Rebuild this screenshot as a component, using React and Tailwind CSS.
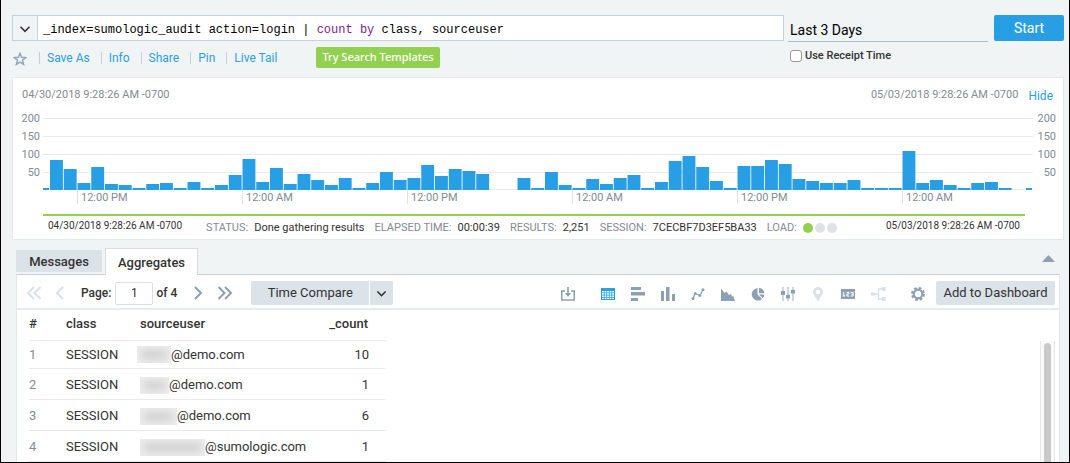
import { useState } from 'react';

const KEYWORDS = ['count', 'by'];

// heights in px above the axis, one per hour
const BARS = [
  30, 21, 7, 23, 6, 5, 2, 6, 7, 2, 8, 2, 5, 15, 31, 8, 22, 6, 16, 10, 5, 12, 2, 7, 18, 10, 12, 25, 14, 21, 19, 16, 0, 0,
  12, 2, 18, 5, 2, 11, 6, 12, 15, 2, 8, 29, 34, 23, 9, 2, 24, 24, 30, 26, 11, 9, 7, 7, 10, 2, 2, 2, 39, 7, 10, 5, 2, 7,
  8, 2, 0
];
const BAR_STEP = 13.75;
const GRID_LINES = [0, 18, 36, 54, 71];
const TICK_LABELS = ['12:00 PM', '12:00 AM', '12:00 PM', '12:00 AM', '12:00 PM', '12:00 AM'];

const ROWS = [
  { id: 1, type: 'SESSION', mask: 'w-[34px] -ml-[3px]', domain: '@demo.com', count: 10 },
  { id: 2, type: 'SESSION', mask: 'w-[29px]', domain: '@demo.com', count: 1 },
  { id: 3, type: 'SESSION', mask: 'w-[37px]', domain: '@demo.com', count: 6 },
  { id: 4, type: 'SESSION', mask: 'w-[65px]', domain: '@sumologic.com', count: 1 }
];

function Chevron({ className }) {
  return (
    <svg className={className} viewBox="0 0 12 12" fill="none" stroke="currentColor" strokeWidth="1.6">
      <path d="M1.5 3.8 6 8.3l4.5-4.5" />
    </svg>
  );
}

function Arrow({ double, flip }) {
  return (
    <svg className={flip ? 'h-4 w-4 -scale-x-100' : 'h-4 w-4'} viewBox="0 0 16 16" fill="none" stroke="currentColor" strokeWidth="2">
      {double ? <path d="m1.5 2 6 6-6 6M8 2l6 6-6 6" /> : <path d="m5 2 6 6-6 6" />}
    </svg>
  );
}

function QueryBox() {
  const [query, setQuery] = useState('_index=sumologic_audit action=login | count by class, sourceuser');

  return (
    <div className="flex h-[26px] min-w-0 flex-1 border border-[#c3d3de] bg-white">
      <button type="button" aria-label="Query options" className="flex w-[25px] shrink-0 items-center justify-center border-r border-[#c3d3de] bg-[#f0f4f5] pt-[2px] text-[#333]">
        <Chevron className="h-3 w-3" />
      </button>
      <div className="relative min-w-0 flex-1 overflow-hidden font-['Liberation_Mono',monospace] text-[12px] leading-[28px] text-black">
        <div aria-hidden="true" className="px-[5px] whitespace-pre">
          {query.split(/(\s+)/).map((word, i) => {
            if (KEYWORDS.includes(word)) return <span key={i} className="text-[#7b1f8f]">{word}</span>;
            return <span key={i}>{word}</span>;
          })}
        </div>
        <input
          aria-label="Search query"
          value={query}
          spellCheck={false}
          onChange={(e) => setQuery(e.target.value)}
          className="absolute inset-x-0 top-0 h-[28px] w-full bg-transparent px-[5px] text-transparent caret-black outline-none"
        />
      </div>
    </div>
  );
}

function QueryLinks() {
  return (
    <div className="flex h-[21px] items-center text-[12px]">
      <button type="button" aria-label="Favorite" className="w-[27px] pl-px text-[#8fa5bb]">
        <svg className="mt-[3px] h-[14px] w-[14px]" viewBox="0 0 15 15" fill="none" stroke="currentColor" strokeWidth="1.5">
          <path d="m7.5 1.4 1.7 4.2 4.5.3-3.5 2.9 1.2 4.5-3.9-2.5-3.9 2.5 1.2-4.5L1.3 5.9l4.5-.3z" />
        </svg>
      </button>
      {['Save As', 'Info', 'Share', 'Pin', 'Live Tail'].map((label) => (
        <a key={label} href="#" className="border-l border-[#c3d0da] pr-[11px] pl-[7px] leading-3 text-[#2a9fe5] last-of-type:pr-0">{label}</a>
      ))}
      <button type="button" className="ml-[39px] h-[21px] rounded-[2px] bg-[#92d050] px-[6px] font-['Noto_Sans',sans-serif] text-[11px] font-medium text-white">
        Try Search Templates
      </button>
    </div>
  );
}

function Histogram() {
  return (
    <div className="flex text-[11px] text-[#848b94]">
      <AxisLabels className="w-[27px]" />
      <div className="ml-[3px] min-w-0 flex-1">
        <svg className="mt-[9px] block h-[72px] w-full" viewBox="0 0 990 72" preserveAspectRatio="none" role="img" aria-label="Messages over time">
          {GRID_LINES.map((y) => <rect key={y} x="0" y={y} width="990" height="1" fill="#e8ebed" />)}
          <g fill="#289fe5">
            <rect x="0" y="70" width="6" height="2" />
            {BARS.map((h, i) => <rect key={i} x={7 + i * BAR_STEP} y={72 - h} width="12.9" height={h} />)}
            <rect x="983" y="70" width="6" height="2" />
          </g>
        </svg>
        <div className="grid grid-cols-[34fr_165fr_165fr_165fr_165fr_165fr_131fr] leading-3">
          <div />
          {TICK_LABELS.map((label, i) => (
            <div key={i} className="border-l border-[#e0e3e5] pt-[2px] pl-[3px] leading-[12px] whitespace-nowrap">{label}</div>
          ))}
        </div>
      </div>
      <AxisLabels className="mr-[7px] w-[23px]" />
    </div>
  );
}

function AxisLabels({ className }) {
  return (
    <div className={`${className} pt-px text-right leading-[18px]`}>
      {[200, 150, 100, 50].map((n) => <div key={n}>{n}</div>)}
    </div>
  );
}

function Stat({ label, children }) {
  return (
    <div className="flex items-center gap-[6px]">
      <span className="text-[#848b94]">{label}:</span>
      <span className="text-[#333]">{children}</span>
    </div>
  );
}

function HistogramPanel() {
  return (
    <section className="mr-[5px] ml-[11px] border border-[#e4e9eb] bg-white">
      <div className="flex h-[31px] items-center pt-[4px] pr-[10px] pl-[9px] text-[11px] text-[#848b94]">
        <span>04/30/2018 9:28:26 AM -0700</span>
        <span className="ml-auto">05/03/2018 9:28:26 AM -0700</span>
        <a href="#" className="ml-[10px] text-[12px] text-[#2a9fe5]">Hide</a>
      </div>
      <Histogram />
      <div className="mt-[10px] mr-[38px] ml-[30px] h-[2px] bg-[#92d050]" />
      <div className="flex h-[23px] items-start pt-[2px] pr-[43px] pl-[35px] text-[10px] leading-4 whitespace-nowrap text-[#333]">
        <span>04/30/2018 9:28:26 AM -0700</span>
        <div className="mt-[2px] ml-6 flex gap-[10px] text-[11px]">
          <Stat label="STATUS">Done gathering results</Stat>
          <Stat label="ELAPSED TIME">00:00:39</Stat>
          <Stat label="RESULTS">2,251</Stat>
          <Stat label="SESSION">7CECBF7D3EF5BA33</Stat>
          <Stat label="LOAD">
            <span className="flex gap-[2px]">
              <i className="h-[10px] w-[10px] rounded-full bg-[#92d050]" />
              <i className="h-[10px] w-[10px] rounded-full bg-[#dbe3e9]" />
              <i className="h-[10px] w-[10px] rounded-full bg-[#dbe3e9]" />
            </span>
          </Stat>
        </div>
        <span className="ml-auto">05/03/2018 9:28:26 AM -0700</span>
      </div>
    </section>
  );
}

const VIEWS = [
  {
    name: 'Table',
    tone: 'text-[#2a9fe5]',
    icon: <path fillRule="evenodd" d="M0 1h14v12H0zM1 4v1.4h1.8V4zm2.6 0v1.4h1.8V4zm2.5 0v1.4h1.8V4zm2.5 0v1.4h1.8V4zm2.6 0v1.4H13V4zM1 6.3v1.4h1.8V6.3zm2.6 0v1.4h1.8V6.3zm2.5 0v1.4h1.8V6.3zm2.5 0v1.4h1.8V6.3zm2.6 0v1.4H13V6.3zM1 8.5v1.4h1.8V8.5zm2.6 0v1.4h1.8V8.5zm2.5 0v1.4h1.8V8.5zm2.5 0v1.4h1.8V8.5zm2.6 0v1.4H13V8.5zM1 10.7V12h1.8v-1.3zm2.6 0V12h1.8v-1.3zm2.5 0V12h1.8v-1.3zm2.5 0V12h1.8v-1.3zm2.6 0V12H13v-1.3z" />
  },
  { name: 'Bar chart', icon: <path d="M0 0h10v3H0zm0 5h14v3.500H0zm0 6h7v3H0z" /> },
  { name: 'Column chart', icon: <path d="M0 4h3v10H0zm5-4h3.500v14H5zm6 7h3v7h-3z" /> },
  {
    name: 'Line chart',
    icon: (
      <>
        <path d="m2 11.500 2-5 5 2 3-6" fill="none" stroke="currentColor" strokeWidth="1.300" />
        <circle cx="2" cy="11.500" r="1.500" />
        <circle cx="4.200" cy="6.500" r="1.500" />
        <circle cx="8.800" cy="8.500" r="1.500" />
        <circle cx="12" cy="2.800" r="1.500" />
      </>
    )
  },
  { name: 'Area chart', icon: <path d="M0 1.500 3.500 6l2-1.500L8 8l1.500-1 2 2.500.8-.3L14 14H0z" /> },
  {
    name: 'Pie chart',
    icon: <path d="M6.500 1v6.500l4.600 4.600A6.300 6.300 0 1 1 6.500 1zM8 .7A6 6 0 0 1 13.300 6.300H8zM8 7.500h5.300a6 6 0 0 1-1.600 3.700z" />
  },
  {
    name: 'Box plot',
    icon: (
      <>
        <path d="M2 0v14M7 0v14M12 0v14" stroke="currentColor" strokeOpacity=".6" strokeWidth="1.400" />
        <path d="M0 4h4v4H0zm5 4h4v3.500H5zm5-5h4v3.500h-4z" />
      </>
    )
  },
  {
    name: 'Map',
    tone: 'text-[#d9e1e8]',
    icon: <path fillRule="evenodd" d="M7 0a5 5 0 0 1 5 5c0 3-3.300 5-4.300 9H6.300C5.300 10 2 8 2 5a5 5 0 0 1 5-5zm0 2.800a2.200 2.200 0 1 0 0 4.400 2.200 2.200 0 0 0 0-4.400z" />
  },
  {
    name: 'Single value',
    icon: (
      <>
        <path d="M0 2h14v10H0z" />
        <path d="M1.800 5.500h1v3.500M1.500 9h2.600M5.500 5.400H8V7H5.800v2h2.500M9.700 5.400h2.500v3.600H9.700m.5-1.900h2" fill="none" stroke="#fff" />
      </>
    )
  },
  {
    name: 'Flow diagram',
    tone: 'text-[#d9e1e8]',
    icon: (
      <>
        <path d="M0 5.500h4v3H0zM11 0h3.500v4H11zm0 10h3.500v4H11z" />
        <path d="M4 7h3.500M11.500 2H7.500v10h4" fill="none" stroke="currentColor" strokeWidth="1.400" />
      </>
    )
  }
];

function IconButton({ label, tone = 'text-[#8ba0b6]', children }) {
  return (
    <button type="button" aria-label={label} className={`flex h-6 w-[30px] shrink-0 items-center justify-center pt-px ${tone}`}>
      <svg className="h-[14px] w-[14px] overflow-visible" viewBox="0 0 14 14" fill="currentColor">{children}</svg>
    </button>
  );
}

function Toolbar() {
  return (
    <div className="flex h-[35px] items-center border-b-2 border-[#e8ebee] pt-[3px] pr-1 pl-[9px] text-[12px] font-medium text-[#333]">
      <button type="button" aria-label="First page" className="text-[#d9e1e8]"><Arrow double flip /></button>
      <button type="button" aria-label="Previous page" className="ml-[10px] text-[#d9e1e8]"><Arrow flip /></button>
      <label htmlFor="page" className="ml-[13px]">Page:</label>
      <input id="page" defaultValue="1" className="ml-1 h-[23px] w-[38px] rounded-[2px] border border-[#d5e0ea] bg-white text-center font-normal" />
      <span className="ml-[3px]">of 4</span>
      <button type="button" aria-label="Next page" className="ml-[13px] text-[#8ba0b6]"><Arrow /></button>
      <button type="button" aria-label="Last page" className="ml-[11px] text-[#8ba0b6]"><Arrow double /></button>
      <div className="ml-[18px] flex h-6 gap-px text-[13px] font-normal">
        <button type="button" className="w-[118px] rounded-l-[2px] bg-[#dbe2e8]">Time Compare</button>
        <button type="button" aria-label="Time compare options" className="flex w-[23px] items-center justify-center rounded-r-[2px] bg-[#dbe2e8]">
          <Chevron className="h-[11px] w-[11px]" />
        </button>
      </div>
      <div className="ml-auto flex">
        <IconButton label="Export">
          <path d="M4 4H.8v9h12.400V4H10" fill="none" stroke="currentColor" strokeWidth="1.500" />
          <path d="M6.200 0h1.600v6H10l-3 4-3-4h2.200z" />
        </IconButton>
        <div className="w-[10px]" />
        {VIEWS.map((view) => <IconButton key={view.name} label={view.name} tone={view.tone}>{view.icon}</IconButton>)}
        <div className="w-[10px]" />
        <IconButton label="Settings">
          <circle cx="7" cy="7" r="4.300" fill="none" stroke="currentColor" strokeWidth="2.200" />
          <circle cx="7" cy="7" r="6" fill="none" stroke="currentColor" strokeWidth="2" strokeDasharray="2.700 2.012" />
        </IconButton>
      </div>
      <button type="button" className="ml-[3px] h-6 w-[119px] rounded-[2px] bg-[#dbe2e8] text-[13px] font-normal">Add to Dashboard</button>
    </div>
  );
}

function ResultsTable() {
  return (
    <table className="w-[357px] table-fixed border-separate border-spacing-0 text-left text-[13px] text-[#333] [&_td]:border-b [&_td]:border-[#e8ebee] [&_th]:border-b [&_th]:border-[#e8ebee]">
      <thead>
        <tr className="h-[31px]">
          <th className="w-[37px] pb-[3px] font-medium">#</th>
          <th className="w-[74px] pb-[3px] font-medium">class</th>
          <th className="pb-[3px] font-medium">sourceuser</th>
          <th className="w-[60px] pr-[18px] pb-[3px] text-right font-medium">_count</th>
        </tr>
      </thead>
      <tbody>
        {ROWS.map((row) => (
          <tr key={row.id} className="h-[31px] first:h-[28px] not-first:[&_td]:pt-[2px]">
            <td className="text-[#848b94]">{row.id}</td>
            <td>{row.type}</td>
            <td>
              <div className="flex items-center">
                <span className={`${row.mask} flex h-[17px] items-center overflow-hidden bg-[#ededed]`}>
                  <span className="mx-1 h-[7px] flex-1 bg-[#c8c8c8] blur-[4px]" />
                </span>
                {row.domain}
              </div>
            </td>
            <td className="pr-[17px] text-right">{row.count}</td>
          </tr>
        ))}
      </tbody>
    </table>
  );
}

export default function App() {
  return (
    <div className="min-h-screen border-r border-b border-l border-black bg-[#f0f4f5] pt-[15px] font-[Roboto,sans-serif]">
      <header className="mb-[9px] flex items-start pr-[5px] pl-[11px]">
        <div className="min-w-0 flex-1">
          <QueryBox />
          <div className="mt-[6px]"><QueryLinks /></div>
        </div>
        <div className="ml-1 w-[200px]">
          <input aria-label="Time range" defaultValue="Last 3 Days" className="h-[27px] w-full border-b border-[#a9bccc] bg-transparent px-[2px] pt-[3px] text-[14px] text-black outline-none" />
          <label className="mt-[7px] flex items-center gap-[3px] pl-[2px] text-[11px] leading-[14px] font-medium text-[#333]">
            <input type="checkbox" className="h-3 w-3 appearance-none rounded-[3px] border border-[#999] bg-white" />
            Use Receipt Time
          </label>
        </div>
        <button type="button" className="ml-[6px] h-[26px] w-[70px] rounded-[2px] bg-[#289fe5] text-[14px] text-white">Start</button>
      </header>

      <HistogramPanel />

      <div className="mt-2 mr-[9px] ml-[15px]">
        <div className="flex items-end text-[13px] font-medium text-[#333]" role="tablist">
          <button type="button" role="tab" aria-selected="false" className="mb-[2px] h-[22px] w-[86px] bg-[#dbe2e8] pt-px">Messages</button>
          <button type="button" role="tab" aria-selected="true" className="z-10 -mb-px ml-[3px] h-[27px] w-[93px] border border-b-0 border-[#d7dee2] bg-white pt-[2px]">Aggregates</button>
          <button type="button" aria-label="Collapse results" className="mr-[5px] mb-[12px] ml-auto">
            <svg className="h-[7px] w-[13px]" viewBox="0 0 13 7" fill="#8ba0b6"><path d="M6.500 0 13 7H0z" /></svg>
          </button>
        </div>
        <section className="border border-b-0 border-[#e4e9eb] border-t-[#c9cfd0] bg-white">
          <Toolbar />
          <div className="flex pr-1 pl-3">
            <ResultsTable />
            <div className="mt-[31px] ml-auto w-[15px] border-x border-[#e8e8e8] bg-[#fafafa] px-[3px] pt-[2px]">
              <div className="h-full rounded-t-full bg-[#c9c9c9]" />
            </div>
          </div>
        </section>
      </div>
    </div>
  );
}
